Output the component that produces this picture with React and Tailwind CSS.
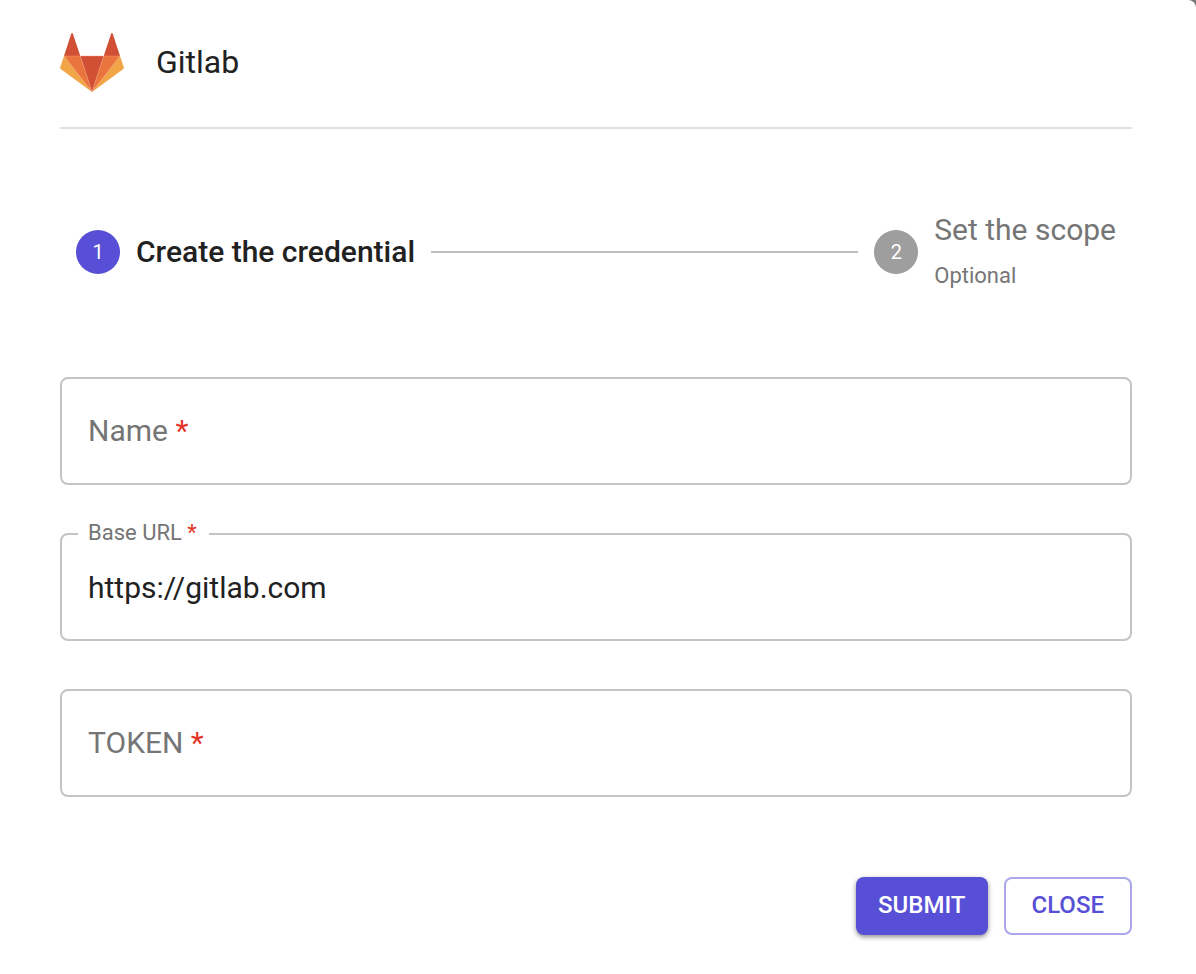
import { useState } from "react";

function GitlabLogo() {
  return (
    <svg viewBox="0 0 64 64" className="size-16 shrink-0" aria-hidden="true">
      <path d="M4 26 11.3 3.6Q12 2.4 12.8 3.6L20.3 26Z" fill="#d14f34" />
      <path d="M60 26 52.7 3.6Q52 2.4 51.2 3.6L43.7 26Z" fill="#d14f34" />
      <path d="M4 26 .2 37.2Q-.1 38.4 1 39.3L32 62Z" fill="#f0a546" />
      <path d="M60 26 63.8 37.2Q64.1 38.4 63 39.3L32 62Z" fill="#f0a546" />
      <path d="M4 26H20.3L32 62Z" fill="#eb743c" />
      <path d="M60 26H43.7L32 62Z" fill="#eb743c" />
      <path d="M20.3 26H43.7L32 62Z" fill="#d14f34" />
      <path
        d="M4 26H60L32 62ZM20.3 26 32 62 43.7 26"
        fill="none"
        stroke="#f3a57d"
        strokeWidth=".4"
      />
    </svg>
  );
}

function StepBadge({ children, active }) {
  return (
    <span
      className={`flex size-11 shrink-0 items-center justify-center rounded-full text-xl text-white ${
        active ? "bg-[#574fd6]" : "bg-[#9e9e9e]"
      }`}
    >
      {children}
    </span>
  );
}

function Field({ id, label, type = "text", initial = "" }) {
  const [value, setValue] = useState(initial);
  return (
    <div className="relative">
      <input
        id={id}
        type={type}
        value={value}
        placeholder=" "
        required
        onChange={(event) => setValue(event.target.value)}
        className="peer block h-[108px] w-full rounded-lg border-2 border-[#c4c4c4] bg-white px-[26px] text-3xl text-[#212121] shadow-none outline-none focus:border-[#574fd6]"
      />
      <label
        htmlFor={id}
        className="pointer-events-none absolute left-[18px] top-0 -translate-y-1/2 bg-white pl-[10px] pr-3 text-[22px] leading-8 text-[#757575] peer-placeholder-shown:top-1/2 peer-placeholder-shown:text-3xl peer-focus:top-0 peer-focus:text-[22px]"
      >
        {label} <span className="text-[#e53528]">*</span>
      </label>
    </div>
  );
}

export default function App() {
  return (
    <div className="min-h-screen bg-[#757575] font-['Roboto',sans-serif] text-[#212121]">
      <main className="min-h-screen rounded-tr-lg bg-white pb-9 pl-[60px] pr-16 pt-[30px]">
        <header className="flex items-center gap-8 border-b-2 border-[#e0e0e0] pb-[33px]">
          <GitlabLogo />
          <h1 className="text-[32px] leading-10">Gitlab</h1>
        </header>

        <ol className="flex items-center gap-4 px-4 pb-[79px] pt-[77px]">
          <li className="flex items-center gap-4" aria-current="step">
            <StepBadge active>1</StepBadge>
            <span className="text-3xl font-medium">Create the credential</span>
          </li>
          <li className="h-0.5 flex-1 bg-[#bdbdbd]" aria-hidden="true" />
          <li className="flex items-center gap-4 text-[#757575]">
            <StepBadge>2</StepBadge>
            <span className="flex flex-col">
              <span className="text-3xl leading-[48px]">Set the scope</span>
              <span className="text-[22px] leading-[44px]">Optional</span>
            </span>
          </li>
        </ol>

        <form onSubmit={(event) => event.preventDefault()}>
          <div className="flex flex-col gap-12">
            <Field id="name" label="Name" />
            <Field id="base-url" label="Base URL" initial="https://gitlab.com" />
            <Field id="token" label="TOKEN" />
          </div>
          <div className="mt-20 flex justify-end gap-4 text-2xl font-medium">
            <button
              type="submit"
              className="h-[58px] rounded-lg bg-[#574fd6] px-[22px] pb-0.5 text-white shadow-[0_2px_5px_rgba(0,0,0,0.45)]"
            >
              SUBMIT
            </button>
            <button
              type="button"
              className="h-[58px] rounded-lg border-2 border-[#aba7ea] px-[26px] pb-0.5 text-[#574fd6]"
            >
              CLOSE
            </button>
          </div>
        </form>
      </main>
    </div>
  );
}
